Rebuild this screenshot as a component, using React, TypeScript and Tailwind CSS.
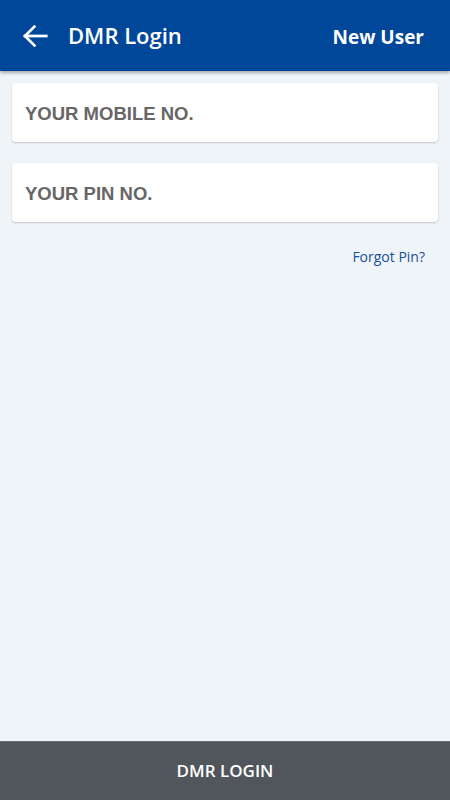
import React from 'react';

export default function App() {
  return (
    <div className="flex h-[800px] w-[450px] flex-col bg-[#eff4f8]" style={{ fontFamily: '"Open Sans", sans-serif' }}>
      {/* Header */}
      <div className="relative z-10 flex h-[71px] items-center bg-[#00479a] px-[20px] shadow-[0_2px_3px_rgba(0,0,0,0.3)]">
        <svg width="30" height="30" viewBox="0 0 24 24" fill="none" stroke="white" strokeWidth="2.2" strokeLinecap="square">
          <path d="M21 12H4" />
          <path d="M11.5 4.5L4 12l7.5 7.5" />
        </svg>
        <span className="ml-[18px] text-[22px] font-semibold text-white">DMR Login</span>
        <span className="ml-auto mr-[6px] mt-[3px] text-[19px] font-bold text-white">New User</span>
      </div>

      {/* Form */}
      <div className="flex flex-col gap-[21px] px-[12px] pt-[12px]">
        <div className="flex h-[59px] items-center rounded-[4px] bg-white px-[13px] pt-[2px] shadow-[0_1px_2px_rgba(0,0,0,0.2)]">
          <input
            className="w-full bg-transparent text-[18.5px] font-bold text-[#666] outline-none placeholder:text-[#666]"
            style={{ fontFamily: '"Liberation Sans", Arial, sans-serif' }}
            placeholder="YOUR MOBILE NO."
          />
        </div>
        <div className="flex h-[59px] items-center rounded-[4px] bg-white px-[13px] pt-[2px] shadow-[0_1px_2px_rgba(0,0,0,0.2)]">
          <input
            className="w-full bg-transparent text-[18.5px] font-bold text-[#666] outline-none placeholder:text-[#666]"
            style={{ fontFamily: '"Liberation Sans", Arial, sans-serif' }}
            placeholder="YOUR PIN NO."
          />
        </div>
      </div>
      <div className="flex justify-end px-[25px] pt-[24px]">
        <span className="text-[14px] text-[#1a4f9c]">Forgot Pin?</span>
      </div>

      {/* Footer */}
      <div className="mt-auto flex h-[59px] items-center justify-center border-t border-[#6b6f75] bg-[#51555c]">
        <span className="text-[17px] font-semibold text-white">DMR LOGIN</span>
      </div>
    </div>
  );
}
